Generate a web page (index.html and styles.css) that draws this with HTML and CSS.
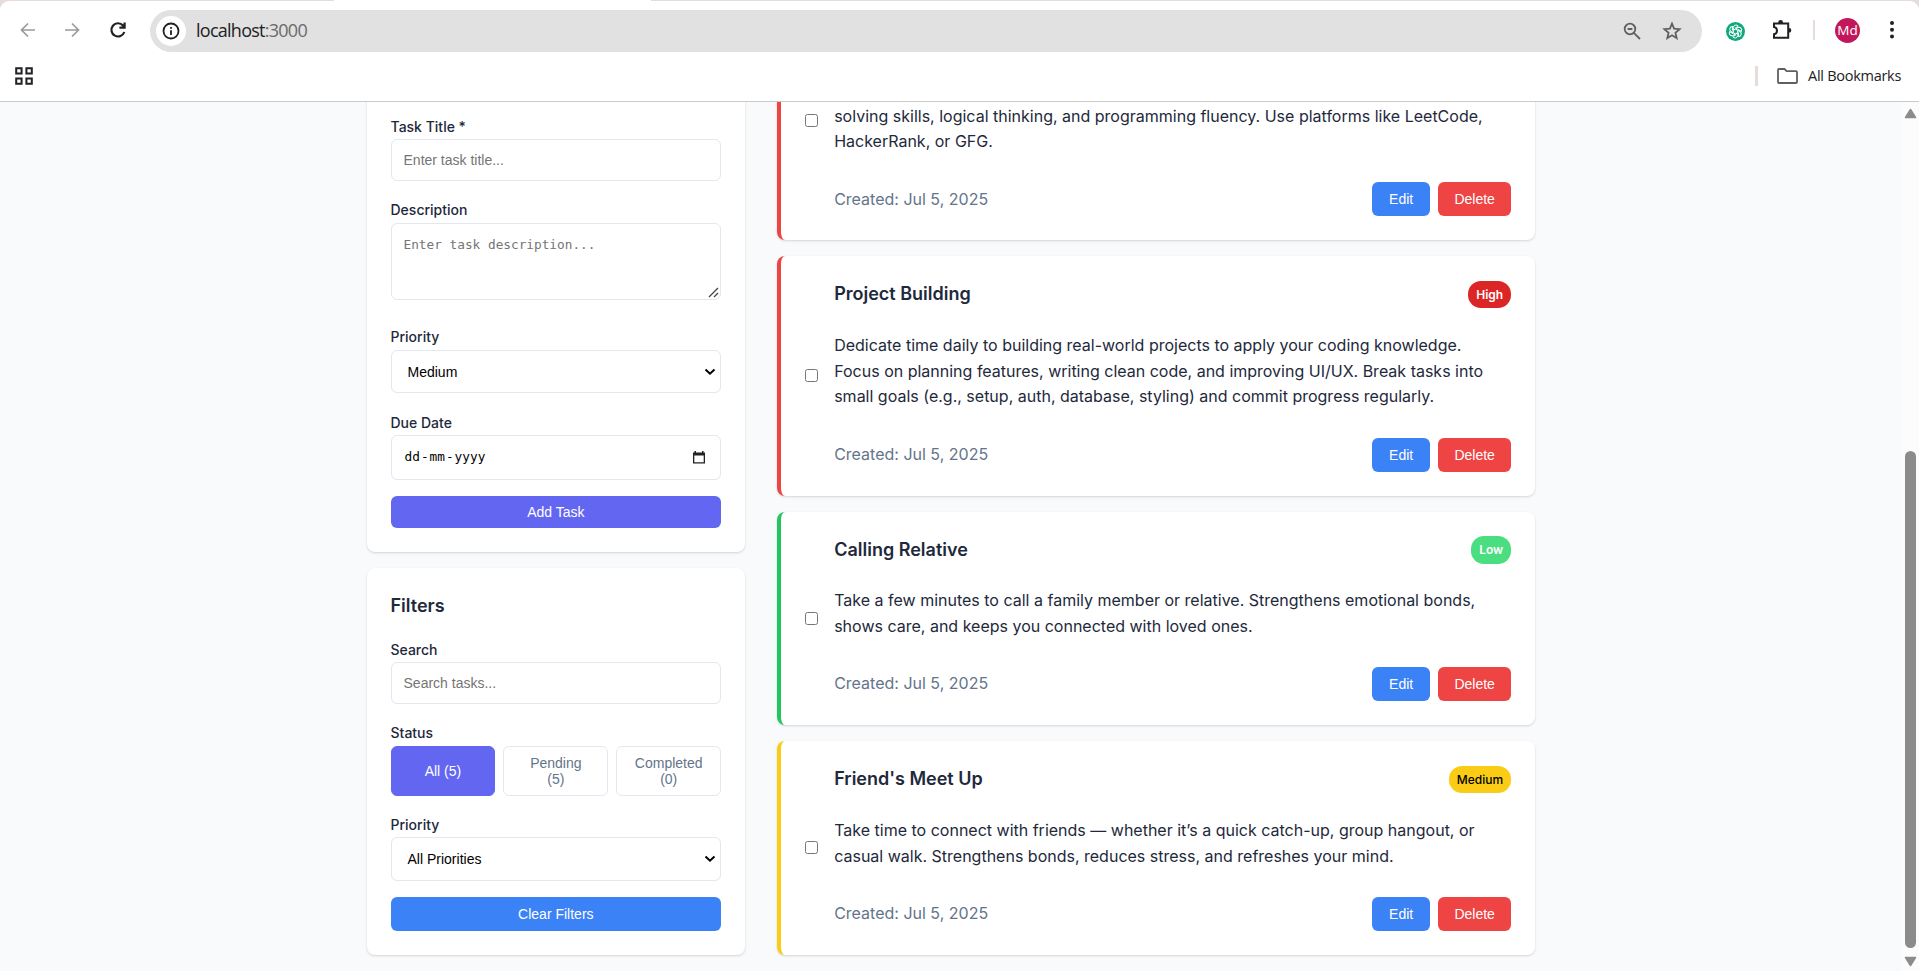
FILE: index.html
```html
<!DOCTYPE html>
<html lang="en">
<head>
<meta charset="utf-8">
<title>Task Manager</title>
<link rel="stylesheet" href="styles.css">
</head>
<body>
<div class="browser">
  <div class="tabstrip"><span class="active-tab"></span></div>
  <header class="chrome">
    <div class="toolbar">
      <svg class="nav back" width="16" height="16" viewBox="0 0 16 16"><path d="M15 8H2M8 1.5L1.5 8L8 14.500"/></svg>
      <svg class="nav forward" width="16" height="16" viewBox="0 0 16 16"><path d="M1 8H14M8 1.500L14.500 8L8 14.500"/></svg>
      <svg class="reload" width="18" height="18" viewBox="0 0 18 18"><path d="M15.300 11A6.600 6.600 0 1 1 14 4.500L15.200 5.900M15.600 1.500V6.600H10.400"/></svg>
      <div class="omnibox">
        <span class="site-info"><svg width="18" height="18" viewBox="0 0 18 18"><circle cx="9" cy="9" r="7.500"/><path d="M9 8.200V13M9 5V6.800"/></svg></span>
        <span class="url">localhost<span class="port">:3000</span></span>
        <svg class="zoom" width="18" height="18" viewBox="0 0 18 18"><circle cx="7" cy="7" r="5.300"/><path d="M10.800 10.800L17 17M4.600 7H9.400"/></svg>
        <svg class="star" width="20" height="20" viewBox="0 0 20 20"><path d="M10 2.600L12.100 7.700L17.600 8.200L13.400 11.800L14.700 17.200L10 14.300L5.300 17.200L6.600 11.800L2.400 8.200L7.900 7.700Z"/></svg>
      </div>
      <svg class="ext" width="19" height="19" viewBox="0 0 19 19"><circle cx="9.500" cy="9.500" r="9.500" fill="#0ea77e"/><g fill="none" stroke="#fff" stroke-width="1"><path id="petal" d="M7.300 10.200V5.600A2.700 2.700 0 0 1 12.300 4.300L8.900 6.300"/><use href="#petal" transform="rotate(60 9.500 9.500)"/><use href="#petal" transform="rotate(120 9.500 9.500)"/><use href="#petal" transform="rotate(180 9.500 9.500)"/><use href="#petal" transform="rotate(240 9.500 9.500)"/><use href="#petal" transform="rotate(300 9.500 9.500)"/></g></svg>
      <svg class="puzzle" width="22" height="22" viewBox="0 0 22 22"><path d="M3 4.500H17.200V18.800H3V15.300Q6 14.800 6 11.700Q6 8.500 3 8Z"/><path class="knob" d="M7.200 4V3.400A2.400 2.400 0 0 1 12 3.400V4ZM17.500 9H18A2.300 2.300 0 0 1 18 13.700H17.500Z"/></svg>
      <span class="divider"></span>
      <span class="avatar">Md</span>
      <svg class="dots" width="6" height="20" viewBox="0 0 6 20"><circle cx="3" cy="3" r="2"/><circle cx="3" cy="9.700" r="2"/><circle cx="3" cy="16.400" r="2"/></svg>
    </div>
    <div class="bookmarks">
      <svg class="apps" width="18" height="18" viewBox="0 0 18 18"><path d="M1.200 1.200H6.600V6.600H1.200ZM11.400 1.200H16.800V6.600H11.400ZM1.200 11.400H6.600V16.800H1.200ZM11.400 11.400H16.800V16.800H11.400Z"/></svg>
      <span class="divider tall"></span>
      <svg class="folder" width="21" height="16" viewBox="0 0 21 16"><path d="M1 2Q1 1 2 1H7.500L9.700 3.200H19Q20 3.200 20 4.200V14Q20 15 19 15H2Q1 15 1 14Z"/></svg>
      <span class="bookmark-label">All Bookmarks</span>
    </div>
  </header>
  <div class="viewport">
    <main class="layout">
      <aside class="sidebar">
        <section class="card">
          <div class="field"><div class="label">Task Title *</div><div class="input">Enter task title...</div></div>
          <div class="field description"><div class="label">Description</div>
            <div class="textarea">Enter task description...<svg width="11" height="11" viewBox="0 0 11 11"><path d="M1 10L10 1M6 10L10 6"/></svg></div></div>
          <div class="field"><div class="label">Priority</div><div class="select">Medium<svg width="12" height="8" viewBox="0 0 12 8"><path d="M1.500 1.500L6 5.700L10.500 1.500"/></svg></div></div>
          <div class="field"><div class="label">Due Date</div><div class="date"><span class="date-text"><span>dd</span><span>-</span><span>mm</span><span>-</span><span>yyyy</span></span><svg width="12" height="13" viewBox="0 0 12 13"><path d="M0 1.500H1.500V0H3V1.500H9V0H10.500V1.500H12V12.500H0ZM1.300 4.500V11.300H10.700V4.500Z" fill-rule="evenodd"/></svg></div></div>
          <div class="button primary">Add Task</div>
        </section>
        <section class="card">
          <h2>Filters</h2>
          <div class="field"><div class="label">Search</div><div class="input">Search tasks...</div></div>
          <div class="field"><div class="label">Status</div>
            <div class="statuses"><div class="status selected">All (5)</div><div class="status">Pending<br>(5)</div><div class="status">Completed<br>(0)</div></div></div>
          <div class="field"><div class="label">Priority</div><div class="select">All Priorities<svg width="12" height="8" viewBox="0 0 12 8"><path d="M1.500 1.500L6 5.700L10.500 1.500"/></svg></div></div>
          <div class="button edit">Clear Filters</div>
        </section>
      </aside>
      <section class="tasks">
        <article class="task high partial">
          <span class="check"></span>
          <div class="body">
            <p>solving skills, logical thinking, and programming fluency. Use platforms like LeetCode,<br>HackerRank, or GFG.</p>
            <div class="meta"><span class="created">Created: Jul 5, 2025</span><span class="button edit">Edit</span><span class="button delete">Delete</span></div>
          </div>
        </article>
        <article class="task high">
          <span class="check"></span>
          <div class="body">
            <div class="head"><h3>Project Building</h3><span class="badge">High</span></div>
            <p>Dedicate time daily to building real-world projects to apply your coding knowledge.<br>Focus on planning features, writing clean code, and improving UI/UX. Break tasks into<br>small goals (e.g., setup, auth, database, styling) and commit progress regularly.</p>
            <div class="meta"><span class="created">Created: Jul 5, 2025</span><span class="button edit">Edit</span><span class="button delete">Delete</span></div>
          </div>
        </article>
        <article class="task low">
          <span class="check"></span>
          <div class="body">
            <div class="head"><h3>Calling Relative</h3><span class="badge">Low</span></div>
            <p>Take a few minutes to call a family member or relative. Strengthens emotional bonds,<br>shows care, and keeps you connected with loved ones.</p>
            <div class="meta"><span class="created">Created: Jul 5, 2025</span><span class="button edit">Edit</span><span class="button delete">Delete</span></div>
          </div>
        </article>
        <article class="task medium">
          <span class="check"></span>
          <div class="body">
            <div class="head"><h3>Friend's Meet Up</h3><span class="badge">Medium</span></div>
            <p>Take time to connect with friends — whether it’s a quick catch-up, group hangout, or<br>casual walk. Strengthens bonds, reduces stress, and refreshes your mind.</p>
            <div class="meta"><span class="created">Created: Jul 5, 2025</span><span class="button edit">Edit</span><span class="button delete">Delete</span></div>
          </div>
        </article>
      </section>
    </main>
    <div class="scrollbar">
      <svg width="13" height="11" viewBox="0 0 13 11"><path d="M6.500 1.500L11.500 9.500H1.500Z"/></svg>
      <span class="thumb"></span>
      <svg width="13" height="11" viewBox="0 0 13 11"><path d="M6.500 9.500L11.500 1.500H1.500Z"/></svg>
    </div>
  </div>
</div>
</body>
</html>
```
FILE: styles.css
```css
* { box-sizing: border-box; }
body { margin: 0; overflow: hidden; }
h2, h3, p { margin: 0; }
svg { display: block; flex: none; fill: none; stroke: #202124; stroke-width: 2; }

.browser { width: 1919px; height: 971px; display: flex; flex-direction: column; background: #e6dcda; }
.tabstrip { height: 1px; flex: none; display: flex; }
.active-tab { width: 317px; margin-left: 334px; background: #fff; }
.chrome { height: 101px; flex: none; background: #fff; border-bottom: 1px solid #c9cccb; border-radius: 9px 9px 0 0; }

.toolbar { display: flex; align-items: center; height: 58px; }
.nav { stroke: #9b9b9c; stroke-width: 1.700; }
.back { margin-left: 20px; }
.forward { margin-left: 28px; }
.reload { margin-left: 29px; stroke-width: 2.200; }
.omnibox { display: flex; align-items: center; width: 1552px; height: 42px; margin-left: 23px; padding: 0 20px 0 6px; border-radius: 21px; background: #e1e1e1; margin-top: 2px; }
.site-info { display: flex; align-items: center; justify-content: center; width: 30px; height: 30px; border-radius: 50%; background: #fff; }
.site-info svg { stroke-width: 1.800; }
.url { flex: 1; margin: -2px 0 0 10px; font: 18px/24px "Open Sans", sans-serif; letter-spacing: -.740px; color: #202124; }
.port { color: #6a6a6b; }
.omnibox .zoom, .omnibox .star { stroke: #5f6062; stroke-width: 1.800; }
.omnibox .star { margin-left: 21px; }
.ext { margin: 2px 0 0 24px; stroke: none; }
.puzzle { margin-left: 26px; }
.puzzle .knob { fill: #202124; stroke: none; }
.divider { width: 2px; height: 20px; margin-left: 20px; background: #e6dcda; }
.avatar { width: 25px; height: 25px; margin-left: 20px; border-radius: 50%; background: #c2185b; color: #fff; text-align: center; font: 13.500px/24px "Open Sans", sans-serif; }
.dots { margin-left: 29px; fill: #202124; stroke: none; }

.bookmarks { display: flex; align-items: center; height: 34px; }
.apps { margin-left: 15px; }
.divider.tall { width: 3px; margin-left: auto; }
.folder { margin-left: 19px; stroke: #5f6062; stroke-width: 1.800; }
.bookmark-label { width: 94px; margin: 0 17px 0 10px; font: 14.500px/20px "Open Sans", sans-serif; letter-spacing: -.270px; white-space: nowrap; color: #202124; }

.viewport { display: flex; flex: 1; min-height: 0; overflow: hidden; background: #f8fafc; font: 16px/25.600px Inter, sans-serif; color: #1e293b; }
.layout { flex: 1; display: flex; justify-content: center; align-items: flex-end; gap: 32px; padding: 0 0 16.300px .700px; }
.sidebar { width: 378.660px; display: flex; flex-direction: column; gap: 16px; }
.card { padding: 24px; border-radius: 8px; background: #fff; box-shadow: 0 1px 3px rgba(0, 0, 0, .1), 0 1px 2px rgba(0, 0, 0, .06); }
h2, h3 { font-size: 18px; line-height: 28.800px; font-weight: 600; }
h2 { margin-bottom: 16px; }
.field { margin-bottom: 16px; }
.field.description { margin-bottom: 24.400px; }
.label { height: 25.600px; padding-top: .200px; font-size: 14px; font-weight: 500; }
.input, .select, .date { display: flex; align-items: center; height: 42px; padding: 0 12px; border: 1px solid #e2e8f0; border-radius: 6px; font: 14px/16px "Liberation Sans", Arial, sans-serif; color: #757575; }
.select { height: 43.500px; padding: 0 4px 0 16px; justify-content: space-between; color: #000; }
.select svg { stroke: #000; }
.date { height: 44.700px; padding: 0 15px 0 13px; justify-content: space-between; color: #000; }
.date-text { display: flex; gap: 1px; font: 12.750px/16px "DejaVu Sans Mono", monospace; }
.date svg { fill: #222; stroke: none; }
.textarea { position: relative; height: 77px; padding: 12px; border: 1px solid #e2e8f0; border-radius: 6px; font: 12.750px/17px "DejaVu Sans Mono", monospace; color: #757575; }
.textarea svg { position: absolute; right: 1px; bottom: 1px; stroke: #444; stroke-width: 1.300; }

.button { display: block; height: 34px; padding: 0 16px; border-radius: 6px; color: #fff; text-align: center; font: 14px/34px "Liberation Sans", Arial, sans-serif; }
.primary { height: 32px; line-height: 32px; background: #6366f1; }
.edit { background: #3b82f6; }
.delete { background: #ef4444; }
.statuses { display: grid; grid-template-columns: repeat(3, 1fr); gap: 8px; }
.status { display: flex; align-items: center; justify-content: center; height: 50px; border: 1px solid #e2e8f0; border-radius: 6px; text-align: center; font: 14px/16px "Liberation Sans", Arial, sans-serif; color: #64748b; }
.selected { border-color: #6366f1; background: #6366f1; color: #fff; }

.tasks { width: 758px; display: flex; flex-direction: column; gap: 16px; }
.task { display: flex; align-items: center; gap: 16px; padding: 24px; border-left: 4px solid; border-radius: 8px; background: #fff; box-shadow: 0 1px 3px rgba(0, 0, 0, .1), 0 1px 2px rgba(0, 0, 0, .06); }
.partial { height: 239.200px; }
.partial .body { align-self: flex-end; }
.high { border-color: #ef4444; }
.low { border-color: #22c55e; }
.medium { border-color: #facc15; }
.check { width: 13px; height: 13px; flex: none; border: 1px solid #767676; border-radius: 2.500px; background: #fff; }
.body { flex: 1; min-width: 0; }
.head { display: flex; align-items: center; justify-content: space-between; height: 28.800px; margin-bottom: 24px; }
.badge { height: 27.200px; padding: 4px 8px; border-radius: 13px; font-size: 12px; line-height: 19.200px; font-weight: 600; color: #fff; }
.high .badge { background: #dc2626; }
.low .badge { background: #4ade80; }
.medium .badge { background: #facc15; color: #000; font-weight: 500; }
.body p { margin-bottom: 27.600px; white-space: nowrap; }
.meta { display: flex; align-items: center; gap: 8px; }
.meta .edit { width: 58px; }
.meta .delete { width: 73px; }
.created { margin-right: auto; color: #64748b; }

.scrollbar { width: 18px; flex: none; display: flex; flex-direction: column; align-items: center; padding: 6px 0 4px 1px; background: #fcfcfc; }
.scrollbar svg { fill: #8b8b8b; stroke: #8b8b8b; stroke-width: 1.500; stroke-linejoin: round; }
.thumb { width: 11px; height: 497px; margin: auto 0 8px; border-radius: 6px; background: #8b8b8b; }
```
